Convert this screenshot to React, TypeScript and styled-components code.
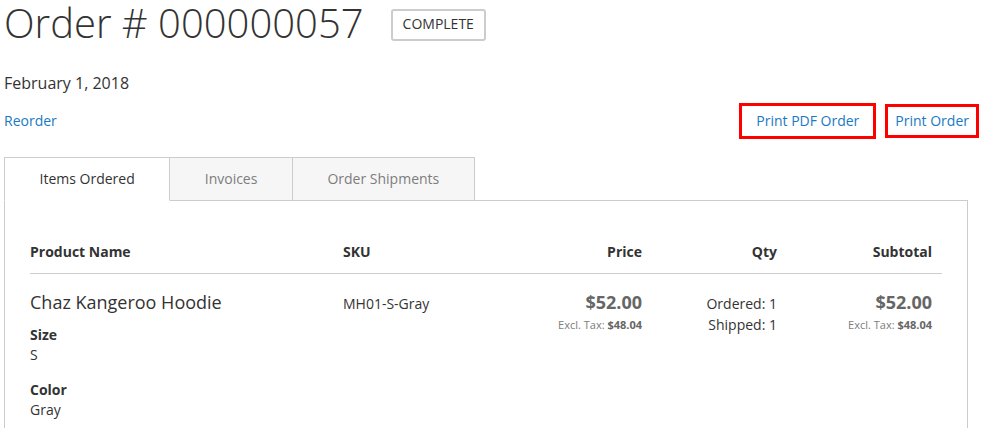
import React from 'react';
import styled, { createGlobalStyle } from 'styled-components';

const GlobalStyle = createGlobalStyle`
  html, body { margin: 0; padding: 0; background: #fff; }
  body {
    font-family: "Open Sans", "Liberation Sans", sans-serif;
    color: #333;
    font-size: 14px;
    line-height: 20px;
  }
`;

const Page = styled.div`
  width: 982px;
  box-sizing: border-box;
  padding: 0 3px 0 4px;
`;

const TitleRow = styled.div`
  display: flex;
  align-items: flex-start;
`;

const Title = styled.h1`
  margin: 1px 0 0;
  font-size: 40px;
  font-weight: 300;
  line-height: 44px;
  color: #333;
`;

const Status = styled.span`
  margin: 9px 0 0 27px;
  border: 2px solid #ccc;
  border-radius: 3px;
  padding: 1px 10px 3px;
  font-size: 14px;
  line-height: 24px;
  text-transform: uppercase;
  color: #333;
`;

const OrderDate = styled.div`
  margin-top: 26px;
  font-size: 16px;
  line-height: 24px;
`;

const ActionsRow = styled.div`
  display: flex;
  justify-content: space-between;
  align-items: center;
  margin-top: 8px;
`;

const Link = styled.a`
  color: #1979c3;
  text-decoration: none;
  font-size: 14px;
  line-height: 20px;
`;

const PrintGroup = styled.div`
  display: flex;
  align-items: center;
  gap: 9px;
`;

const PrintLink = styled(Link)<{ $wide?: boolean }>`
  border: 3px solid #f00;
  padding: ${(p) => (p.$wide ? '5px 14px' : '4px 7px')};
`;

const TabList = styled.div`
  display: flex;
  align-items: flex-end;
  margin-top: 18px;
  margin-bottom: -1px;
`;

const Tab = styled.div<{ $active?: boolean }>`
  position: relative;
  z-index: ${(p) => (p.$active ? 1 : 0)};
  padding: 11px 34.5px;
  margin-right: -1px;
  border: 1px solid #ccc;
  border-bottom-color: ${(p) => (p.$active ? '#fff' : '#ccc')};
  background: ${(p) => (p.$active ? '#fff' : '#f6f6f6')};
  color: ${(p) => (p.$active ? '#333' : '#7d7d7d')};
  line-height: 20px;
`;

const Panel = styled.div`
  border: 1px solid #ccc;
  margin-right: 11px;
  padding: 30px 25px 40px;
`;

const Row = styled.div<{ $head?: boolean }>`
  display: grid;
  grid-template-columns: 303px 179px 140px 135px 155px;
  align-items: ${(p) => (p.$head ? 'start' : 'baseline')};
  border-bottom: ${(p) => (p.$head ? '1px solid #ccc' : 'none')};
  padding-top: ${(p) => (p.$head ? '0' : '15px')};
`;

const Cell = styled.div<{ $right?: boolean; $first?: boolean; $head?: boolean }>`
  padding: ${(p) => (p.$head ? '11px' : '0')} 10px ${(p) => (p.$head ? '11px' : '0')}
    ${(p) => (p.$first ? '0' : '10px')};
  text-align: ${(p) => (p.$right ? 'right' : 'left')};
  font-weight: ${(p) => (p.$head ? 700 : 400)};
`;

const ProductName = styled.div`
  font-size: 18px;
  line-height: 26px;
`;

const Options = styled.dl`
  margin: 10px 0 0;
`;

const OptionLabel = styled.dt`
  font-weight: 700;
`;

const OptionValue = styled.dd`
  margin: 0 0 15px;
`;

const Price = styled.div`
  font-size: 18px;
  line-height: 26px;
  font-weight: 700;
  color: #666;
`;

const ExclTax = styled.div`
  margin-top: 2px;
  font-size: 11px;
  line-height: 16px;
  color: #7d7d7d;

  strong {
    color: #666;
    font-weight: 700;
  }
`;

const QtyLine = styled.div`
  line-height: 21px;
`;

const columns = [
  { label: 'Product Name', right: false },
  { label: 'SKU', right: false },
  { label: 'Price', right: true },
  { label: 'Qty', right: true },
  { label: 'Subtotal', right: true },
];

export default function App() {
  return (
    <Page>
      <GlobalStyle />
      <TitleRow>
        <Title>Order # 000000057</Title>
        <Status>Complete</Status>
      </TitleRow>
      <OrderDate>February 1, 2018</OrderDate>
      <ActionsRow>
        <Link href="#">Reorder</Link>
        <PrintGroup>
          <PrintLink href="#" $wide>
            Print PDF Order
          </PrintLink>
          <PrintLink href="#">Print Order</PrintLink>
        </PrintGroup>
      </ActionsRow>
      <TabList>
        <Tab $active>Items Ordered</Tab>
        <Tab>Invoices</Tab>
        <Tab>Order Shipments</Tab>
      </TabList>
      <Panel>
        <Row $head>
          {columns.map((c, i) => (
            <Cell key={c.label} $head $right={c.right} $first={i === 0}>
              {c.label}
            </Cell>
          ))}
        </Row>
        <Row>
          <Cell $first>
            <ProductName>Chaz Kangeroo Hoodie</ProductName>
            <Options>
              <OptionLabel>Size</OptionLabel>
              <OptionValue>S</OptionValue>
              <OptionLabel>Color</OptionLabel>
              <OptionValue>Gray</OptionValue>
            </Options>
          </Cell>
          <Cell>MH01-S-Gray</Cell>
          <Cell $right>
            <Price>$52.00</Price>
            <ExclTax>
              Excl. Tax: <strong>$48.04</strong>
            </ExclTax>
          </Cell>
          <Cell $right>
            <QtyLine>Ordered: 1</QtyLine>
            <QtyLine>Shipped: 1</QtyLine>
          </Cell>
          <Cell $right>
            <Price>$52.00</Price>
            <ExclTax>
              Excl. Tax: <strong>$48.04</strong>
            </ExclTax>
          </Cell>
        </Row>
      </Panel>
    </Page>
  );
}
